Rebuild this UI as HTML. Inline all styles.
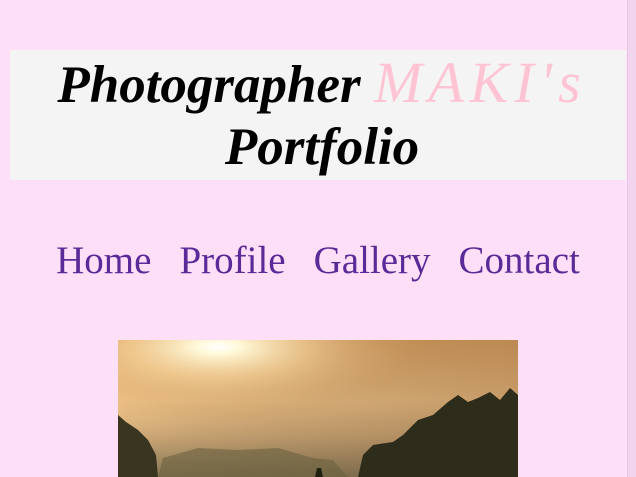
<!DOCTYPE html>
<html><head><style>
html,body{margin:0;padding:0}
body{width:636px;height:477px;overflow:hidden;background:#fde0f8;font-family:"Liberation Serif",serif;position:relative}
.hd{position:absolute;left:10px;top:50px;width:616px;height:130px;background:#f4f4f4;text-align:center;font-style:italic;font-weight:bold;font-size:53px;line-height:62px;padding-top:2px;padding-left:8px;box-sizing:border-box}
.hd span{color:#ffc4d4;font-weight:normal;letter-spacing:6px;font-size:58px}
.nav{position:absolute;top:238px;left:0;width:636px;text-align:center;font-size:39px;color:#5a2a98}
.nav a{margin:0 14px}
.sb{position:absolute;right:0;top:0;width:8px;height:477px;background:#f3d4ee;border-left:1px solid #e8c8e8}
</style></head><body>
<div class="hd">Photographer <span>MAKI's</span><br>Portfolio</div>
<div class="nav"><a>Home</a><a>Profile</a><a>Gallery</a><a>Contact</a></div>
<svg style="position:absolute;left:118px;top:340px" width="400" height="137" viewBox="0 0 400 137">
<defs>
<linearGradient id="g" x1="0" y1="0" x2="0" y2="1"><stop offset="0" stop-color="#e0a868"/><stop offset="0.45" stop-color="#f0c488"/><stop offset="0.7" stop-color="#d0aa78"/><stop offset="1" stop-color="#8a7a58"/></linearGradient>
<radialGradient id="s" cx="0.25" cy="0.05" r="0.55"><stop offset="0" stop-color="#ffffff"/><stop offset="0.1" stop-color="#fff8d8"/><stop offset="0.4" stop-color="#f8d8a0" stop-opacity="0.6"/><stop offset="1" stop-color="#c08850" stop-opacity="0"/></radialGradient>
<linearGradient id="r" x1="0" y1="0" x2="1" y2="0"><stop offset="0" stop-color="#000" stop-opacity="0"/><stop offset="1" stop-color="#6a4020" stop-opacity="0.3"/></linearGradient>
</defs>
<rect width="400" height="137" fill="url(#g)"/>
<rect width="400" height="137" fill="url(#r)"/>
<rect width="400" height="137" fill="url(#s)"/>
<path d="M40,137 L45,118 L80,108 L120,110 L160,108 L195,118 L215,120 L230,137Z" fill="#6a6040" opacity="0.6"/>
<path d="M0,75 L8,82 L20,90 L30,100 L38,115 L40,137 L0,137Z" fill="#3a3520"/>
<path d="M240,137 L245,115 L255,105 L275,102 L285,95 L300,80 L315,75 L330,62 L340,55 L350,62 L360,58 L372,52 L382,60 L392,48 L400,55 L400,137Z" fill="#2e2c1a"/>
<path d="M197,137 L199,128 L203,128 L205,137Z" fill="#202010"/>
</svg>
<div class="sb"></div>
</body></html>
